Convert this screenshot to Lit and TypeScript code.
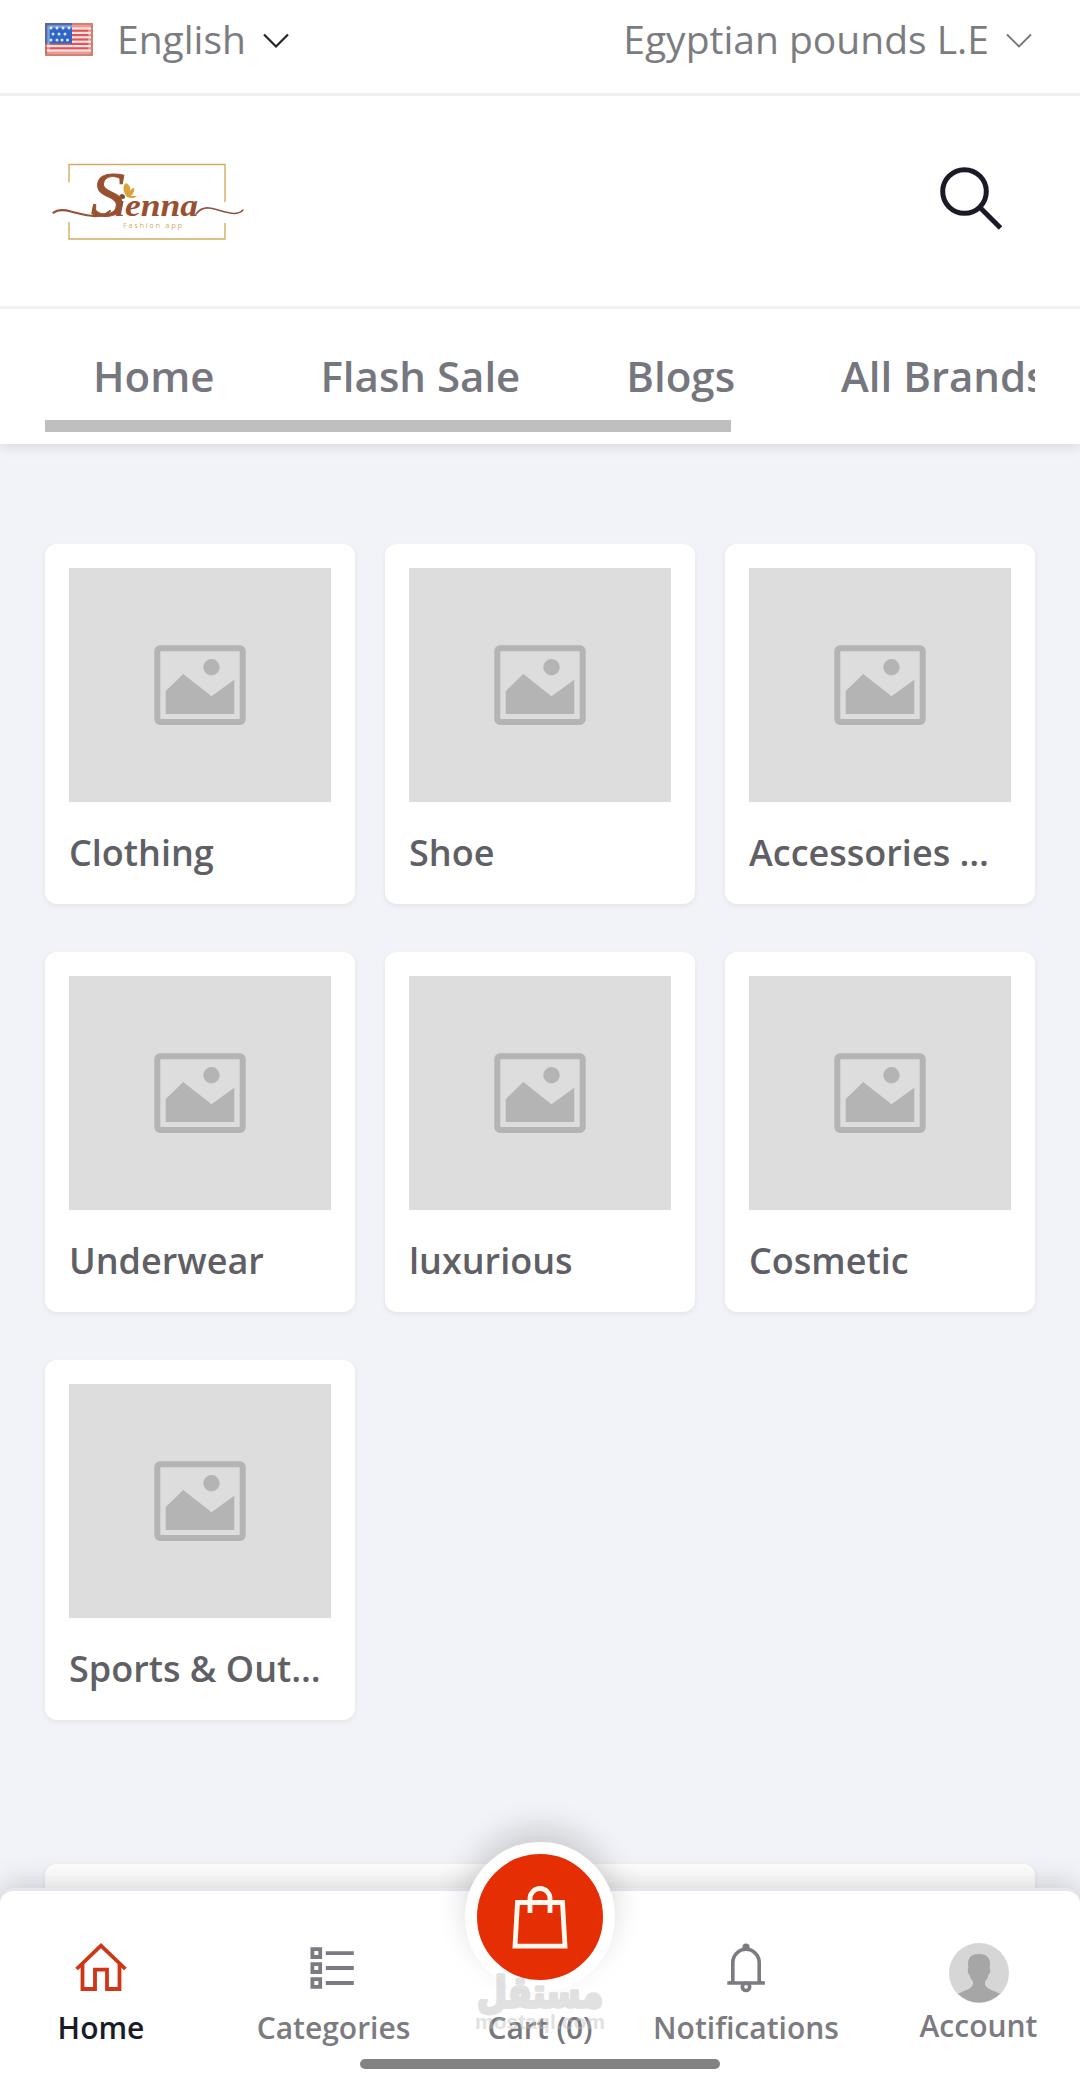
import { LitElement, html, css, svg } from "lit";
import { customElement, property } from "lit/decorators.js";

@customElement("us-flag")
class UsFlag extends LitElement {
  static styles = css`
    :host { display: block; width: 48px; height: 33px; }
    svg { display: block; }
  `;
  render() {
    const stripes = [0, 1, 2, 3, 4, 5, 6].map((i) => svg`
      <rect x="0" y=${2.2 + i * 4.4} width="46" height="2.2" fill="#e2545a"></rect>`);
    const stars = [
      [6, 5], [12, 5], [18, 5], [24, 5], [8, 11], [14, 11], [20, 11], [6, 17], [12, 17], [17, 17], [22.5, 17],
    ].map(([x, y]) => svg`<circle cx=${x} cy=${y} r="1.5" fill="#d5e6ff"></circle>`);
    return html`
      <svg width="48" height="33" viewBox="0 0 48 33">
        <rect width="48" height="33" fill="#fde6df"></rect>
        ${stripes}
        <rect width="27" height="20.5" fill="#2f66c6"></rect>
        ${stars}
        <rect x="3.5" y="3.5" width="41" height="26" fill="none" stroke="#ffffff" stroke-opacity=".38" stroke-width="2.5"></rect>
        <path d="M27 1H47V32H1V21" fill="none" stroke="#c8705c" stroke-opacity=".85" stroke-width="2"></path>
        <path d="M1 21V1H27" fill="none" stroke="#5a66a0" stroke-width="2"></path>
      </svg>`;
  }
}

@customElement("brand-logo")
class BrandLogo extends LitElement {
  static styles = css`
    :host { display: block; width: 200px; height: 90px; }
    svg { display: block; overflow: visible; }
    .name { font-family: "Liberation Serif", serif; font-style: italic; fill: #99502f; }
    .initial { font-weight: 400; stroke: #99502f; stroke-width: 0.9px; }
    .rest { font-weight: 700; }
    .sub { font-family: "Open Sans", sans-serif; font-size: 7.5px; letter-spacing: 2px; fill: #d3ae68; }
  `;
  render() {
    return html`
      <svg width="200" height="90" viewBox="0 0 200 90">
        <g fill="none" stroke="#d2ae5f" stroke-width="1.4">
          <path d="M16 27.5V9.5H172V47"></path>
          <path d="M16 67V84H172V68"></path>
        </g>
        <g fill="none" stroke="#925339" stroke-linecap="round">
          <path d="M0.5 57.7C5 54 11 54.5 18 56.5C28 59 34 61.500 44 61C50 60.500 54 59 57 56" stroke-width="2.2"></path>
          <path d="M143 59C147 54 151 52.500 156 53C164 54 172 58 181 58.500C185 58.500 188 57 190 55" stroke-width="1.6"></path>
        </g>
        <text class="name initial" x="38" y="60.5" font-size="63" textLength="34" lengthAdjust="spacingAndGlyphs">S</text>
        <text class="name rest" x="62" y="61" font-size="32" textLength="83" lengthAdjust="spacingAndGlyphs">ienna</text>
        <path d="M74 42C70 37 69 31 73 28C79 31 78 37 75 41C77 35 79 33 81 33C82 36 80 39 78 41L84 41C81 44 77 43 74 42Z" fill="#dca23c"></path>
        <circle cx="70" cy="42" r="2" fill="#6f5638"></circle>
        <text class="sub" x="70" y="73" textLength="61">Fashion app</text>
      </svg>`;
  }
}

@customElement("top-bar")
class TopBar extends LitElement {
  static styles = css`
    :host {
      display: flex; justify-content: space-between; align-items: flex-start; box-sizing: border-box;
      height: 96px; padding: 9px 48px 0 45px; border-bottom: 3px solid #f0f0f1; background: #fff;
      font: 400 39px/60px "Open Sans", sans-serif; color: #7c7c80;
    }
    .choice { display: flex; align-items: center; }
    .flag { margin: 1px 24px 0 0; }
    .arrow { display: block; margin: 3px 0 0 17px; }
  `;
  private arrow(color: string, width: number) {
    return html`<svg class="arrow" width="26" height="16" viewBox="0 0 26 16">
      <path d="M1 1.5L13 13.5L25 1.5" fill="none" stroke=${color} stroke-width=${width}></path></svg>`;
  }
  render() {
    return html`
      <div class="choice"><us-flag class="flag"></us-flag><span>English</span>${this.arrow("#24242c", 2.2)}</div>
      <div class="choice"><span>Egyptian pounds L.E</span>${this.arrow("#76767c", 1.8)}</div>`;
  }
}

@customElement("brand-bar")
class BrandBar extends LitElement {
  static styles = css`
    :host {
      display: flex; justify-content: space-between; box-sizing: border-box; height: 213px;
      padding: 59px 76px 0 53px; border-bottom: 3px solid #f0f1f4; background: #fff;
      position: relative; z-index: 1;
    }
    .search { display: block; margin-top: 9.500px; }
  `;
  render() {
    return html`
      <brand-logo></brand-logo>
      <svg class="search" width="66" height="66" viewBox="0 0 66 66">
        <circle cx="26.5" cy="26.5" r="21.8" fill="none" stroke="#1b1b28" stroke-width="5"></circle>
        <path d="M42 42.5L62.5 63" stroke="#1b1b28" stroke-width="5"></path>
      </svg>`;
  }
}

@customElement("menu-bar")
class MenuBar extends LitElement {
  static styles = css`
    :host {
      display: block; box-sizing: border-box; height: 135px; padding: 35px 45px 0; background: #fff;
      box-shadow: 0 3px 12px rgba(40, 42, 53, 0.12); position: relative;
    }
    .links {
      display: flex; gap: 106px; height: 76px; padding-left: 48px; overflow: hidden; white-space: nowrap;
      font: 600 42px/64px "Open Sans", sans-serif; color: #76767e;
    }
    .thumb { width: 686px; height: 12px; background: #bfbfbf; }
  `;
  render() {
    return html`
      <nav class="links">${["Home", "Flash Sale", "Blogs", "All Brands"].map((t) => html`<span>${t}</span>`)}</nav>
      <div class="thumb"></div>`;
  }
}

@customElement("category-card")
class CategoryCard extends LitElement {
  @property() name = "";
  static styles = css`
    :host {
      display: block; box-sizing: border-box; height: 360px; padding: 24px; border-radius: 12px;
      background: #fff; box-shadow: 0 2px 5px rgba(40, 42, 53, 0.07);
    }
    .picture { display: flex; justify-content: center; align-items: center; height: 234px; background: #ddd; }
    .title {
      margin-top: 24px; font: 600 36px/54px "Open Sans", sans-serif; color: #5f5f65;
      white-space: nowrap; overflow: hidden; text-overflow: ellipsis;
    }
  `;
  render() {
    return html`
      <div class="picture">
        <svg width="92" height="80" viewBox="0 0 92 80">
          <rect x="3.3" y="3.3" width="85.4" height="73.6" rx="2.6" fill="none" stroke="#b4b4b4" stroke-width="6"></rect>
          <circle cx="57.5" cy="22.3" r="8.2" fill="#b4b4b4"></circle>
          <path d="M11.7 69V46L29.3 29L57.5 51.3L80.3 34.7V69Z" fill="#b4b4b4"></path>
        </svg>
      </div>
      <div class="title">${this.name}</div>`;
  }
}

@customElement("tab-bar")
class TabBar extends LitElement {
  static styles = css`
    :host {
      display: block; box-sizing: border-box; height: 187px; position: absolute; left: 0; right: 0; bottom: 0;
      border-top: 3px solid #e6e8ee; border-radius: 15px 15px 0 0; background: #fff;
      box-shadow: 0 -3px 30px rgba(0, 0, 0, 0.18);
      font: 600 30px/45px "Open Sans", sans-serif; color: #7b7b80;
    }
    .tabs { display: grid; grid-template-columns: 202px 263px 150px 262px 203px; white-space: nowrap; }
    .tab { display: flex; flex-direction: column; align-items: center; padding-top: 49px; }
    .tab svg { display: block; }
    .tab span { margin-top: 11px; }
    .tab.active { color: #1b1b28; }
    .tab.account { padding-top: 52px; }
    .tab.account span { margin-top: 0; line-height: 45px; }
    .tab.cart { padding-top: 0; margin-top: -49px; color: #76767c; }
    .tab.cart span { margin-top: 13px; }
    .disc {
      display: flex; justify-content: center; align-items: center; box-sizing: border-box; width: 150px; height: 150px;
      border: 12px solid #fff; border-radius: 50%; background: #e62e04; box-shadow: 0 -15px 30px rgba(0, 0, 0, 0.15);
    }
    .handle {
      position: absolute; left: 360px; bottom: 6px; width: 360px; height: 10px; border-radius: 5px; background: #828282;
    }
    .mark {
      position: absolute; left: 474px; bottom: 31px; width: 132px; height: 70px; display: block; overflow: visible;
      font-family: "DejaVu Sans", sans-serif; fill: #bdbdbd; opacity: 0.45;
    }
    .arabic { stroke: #bdbdbd; stroke-width: 3.4px; stroke-linejoin: round; }
    .latin { font-family: "Liberation Sans", sans-serif; font-weight: 700; }
  `;
  render() {
    return html`
      <nav class="tabs">
        <div class="tab active">
          <svg width="52" height="54" viewBox="0 0 52 54" fill="none" stroke="#cf3517" stroke-width="3.8">
            <path d="M1.6 29L26 5.6L50.4 29"></path><path d="M7.5 24V49H20V29.7H32V49H44.5V24"></path>
          </svg><span>Home</span>
        </div>
        <div class="tab">
          <svg width="54" height="54" viewBox="0 0 54 54" fill="none" stroke="#7b7b82" stroke-width="3.8">
            <path d="M5.4 9.2h7.8v7.8h-7.8zM5.4 24.2h7.8v7.8h-7.8zM5.4 39.1h7.8v7.8h-7.8zM18.8 13.1h28M18.8 28h28M18.8 43h28"></path>
          </svg><span>Categories</span>
        </div>
        <div class="tab cart">
          <div class="disc">
            <svg width="56" height="66" viewBox="0 0 56 66" fill="none" stroke="#fff8ef" stroke-width="4.8">
              <path d="M5.5 18.5H50.5L53 62.2H3Z"></path><path d="M18 29V14.5a10 10 0 0 1 20 0V29"></path>
            </svg>
          </div>
          <span>Cart (0)</span>
        </div>
        <div class="tab">
          <svg width="52" height="54" viewBox="0 0 52 54" fill="none" stroke="#7b7b82" stroke-width="3.6">
            <path d="M7.3 43H44.9M12.8 43V22.5a13.2 13.2 0 0 1 26.4 0V43"></path>
            <circle cx="26" cy="7.2" r="3.6" fill="#7b7b82" stroke="none"></circle>
            <circle cx="26" cy="46.8" r="3.7"></circle>
            <path d="M9 42.5q3.5-.5 3.8-4M43 42.5q-3.500-.5-3.8-4" stroke-width="2"></path>
          </svg><span>Notifications</span>
        </div>
        <div class="tab account">
          <svg width="60" height="60" viewBox="0 0 60 60">
            <circle cx="30" cy="30" r="30" fill="#d6d6d6"></circle>
            <path d="M30 11C37 11 41 14 41 21L40.6 25C42 27 41 31 39.5 32C38.7 35 37.5 37 36 38.500V41C37 46 43 47 51 50.8A30 30 0 0 1 9 50.8C17 47 23 46 24 41V38.500C22.500 37 21.300 35 20.500 32C19 31 18 27 19.400 25L19 21C19 14 23 11 30 11Z" fill="#a6a6a6"></path>
          </svg><span>Account</span>
        </div>
      </nav>
      <div class="handle"></div>
      <svg class="mark" width="132" height="70" viewBox="0 0 132 70">
        <text class="arabic" x="66" y="33" font-size="42" text-anchor="middle" textLength="126" lengthAdjust="spacingAndGlyphs">مستقل</text>
        <text class="latin" x="1" y="55" font-size="20" textLength="130" lengthAdjust="spacingAndGlyphs">mostaql.com</text>
      </svg>`;
  }
}

@customElement("app-root")
class AppRoot extends LitElement {
  static styles = css`
    :host { display: block; position: relative; width: 1080px; height: 2075px; overflow: hidden; background: #f2f3f8; }
    .grid { display: grid; grid-template-columns: repeat(3, 310px); gap: 48px 30px; padding: 99.500px 45px 0; }
    .next { height: 200px; margin: 144px 45px 0; border-radius: 12px; background: #fff; box-shadow: 0 2px 5px rgba(40, 42, 53, 0.07); }
  `;
  private names = ["Clothing", "Shoe", "Accessories & Bags", "Underwear", "luxurious", "Cosmetic", "Sports & Outdoor"];
  render() {
    return html`
      <top-bar></top-bar>
      <brand-bar></brand-bar>
      <menu-bar></menu-bar>
      <main class="grid">${this.names.map((n) => html`<category-card .name=${n}></category-card>`)}</main>
      <div class="next"></div>
      <tab-bar></tab-bar>`;
  }
}
